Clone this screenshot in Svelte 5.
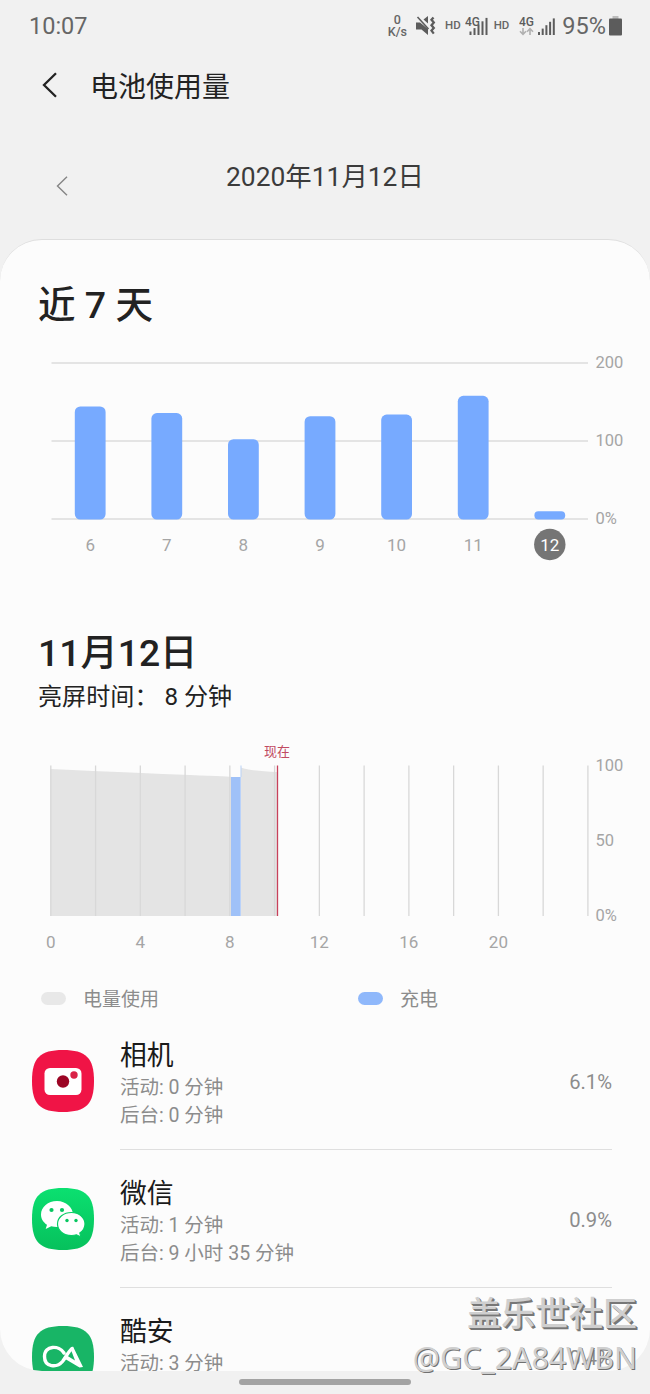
<script>
  const days = [
    { label: '6', value: 145 },
    { label: '7', value: 136.5 },
    { label: '8', value: 103 },
    { label: '9', value: 132.5 },
    { label: '10', value: 134.5 },
    { label: '11', value: 158.5 },
    { label: '12', value: 10.5, selected: true }
  ];

  const apps = [
    { icon: 'camera', name: '相机', lines: ['活动: 0 分钟', '后台: 0 分钟'], percent: '6.1%' },
    { icon: 'wechat', name: '微信', lines: ['活动: 1 分钟', '后台: 9 小时 35 分钟'], percent: '0.9%' },
    { icon: 'coolapk', name: '酷安', lines: ['活动: 3 分钟'], percent: '0.4%' }
  ];

  const dayX = (i) => 90.2 + i * 76.6;
  const barHeight = (value) => value * 0.78;
  const hourX = (hour) => 50.8 + hour * 22.38;

  const hourLines = [0, 2, 4, 6, 8, 10, 12, 14, 16, 18, 20, 22, 24];
  const hourLabels = [0, 4, 8, 12, 16, 20];
  const signal = [0, 1, 2, 3, 4];

  const tile = 'M31 0C54 0 62 8 62 31S54 62 31 62 0 54 0 31 8 0 31 0z';
</script>

<div class="screen">
  <div class="status">
    <span class="clock">10:07</span>
    <div class="speed"><span>0</span><span>K/s</span></div>
    <svg class="mute" width="20" height="20" viewBox="0 0 20 20">
      <path d="M0 6.500h4L12 13v6l-6.500-5.500H0z" fill="#5c5c5c" />
      <path d="M7.500 3.500L12 0v7.500z" fill="#5c5c5c" />
      <path d="M1.500 1l11 12" stroke="#5c5c5c" stroke-width="1.600" />
      <path d="M17.500 1.500l-2 2.300 2.300 2.700-2.300 2.700 2.300 2.700-2.300 2.700 2.300 3" fill="none" stroke="#5c5c5c" stroke-width="2.300" />
    </svg>
    <span class="hd">HD</span>
    <svg class="sim1" width="23" height="22" viewBox="0 0 23 22">
      <text x="0" y="10.500" class="net">4G</text>
      {#each signal as i}
        <rect x={4.5 + i * 4} y={16.5 - i * 3.4} width="2" height={3.5 + i * 3.4} fill="#5c5c5c" />
      {/each}
    </svg>
    <span class="hd">HD</span>
    <svg class="sim2" width="37" height="22" viewBox="0 0 37 22">
      <text x="0" y="10.500" class="net">4G</text>
      <path d="M4 13v6M1 16.300l3 3 3-3M11 20v-6M8 16.700l3-3 3 3" fill="none" stroke="#b0b0b0" stroke-width="1.600" />
      {#each signal as i}
        <rect x={19 + i * 3.7} y={17 - i * 3.4} width="2" height={3 + i * 3.4} fill="#5c5c5c" />
      {/each}
    </svg>
    <span class="level">95%</span>
    <svg width="13" height="20" viewBox="0 0 13 20">
      <rect x="3.500" y="0" width="6" height="4" fill="#bdbdbd" />
      <rect y="2.500" width="13" height="17" rx="1" fill="#5c5c5c" />
    </svg>
  </div>

  <header>
    <svg width="16" height="26" viewBox="0 0 16 26">
      <path d="M14 1.200L2 13l12 11.800" fill="none" stroke="#222" stroke-width="2.300" />
    </svg>
    <h1>电池使用量</h1>
  </header>

  <div class="date">
    <svg width="12" height="20" viewBox="0 0 12 20">
      <path d="M11 0.800L1.500 10 11 19.200" fill="none" stroke="#858585" stroke-width="1.400" />
    </svg>
    <span>2020年11月12日</span>
  </div>

  <main>
    <h2>近 7 天</h2>

    <svg class="chart" width="650" height="230" viewBox="0 340 650 230">
      {#each [[200, 363], [100, 441], ['0%', 519]] as [label, y]}
        <line x1="51.500" x2="588" y1={y} y2={y} stroke="#dcdcdc" stroke-width="1.500" />
        <text x="595.500" y={y + 5.2}>{label}</text>
      {/each}
      {#each days as day, i}
        <rect x={dayX(i) - 15.4} y={519.5 - barHeight(day.value)} width="30.800" height={barHeight(day.value)} rx={day.selected ? 4 : 5.5} fill="#77aaff" />
        {#if day.selected}
          <circle cx={dayX(i)} cy="544.500" r="15.700" fill="#757575" />
        {/if}
        <text class="day" class:selected={day.selected} x={dayX(i)} y="551">{day.label}</text>
      {/each}
    </svg>

    <h2 class="today">11月12日</h2>
    <p class="screen-time">亮屏时间： 8 分钟</p>

    <svg class="chart" width="650" height="225" viewBox="0 735 650 225">
      <path d="M50.500 769Q140 773 190 775T231 777V916H50.500zM241 767.500Q251 771 277 772V916H241z" fill="#e4e4e4" />
      {#each hourLines as hour}
        <line x1={hourX(hour)} x2={hourX(hour)} y1="765.500" y2="916" stroke="#d8d8d8" stroke-width="1.300" />
      {/each}
      <rect x="231" y="777" width="9.700" height="139" fill="#9fc1f8" />
      <line x1="241" x2="241" y1="765.500" y2="777" stroke="#b9d1f5" />
      <line x1="277.500" x2="277.500" y1="765.500" y2="916" stroke="#c8415b" stroke-width="1.300" />
      <text class="now" x="277" y="756">现在</text>
      <text x="595.500" y="770.500">100</text>
      <text x="595.500" y="845.500">50</text>
      <text x="595.500" y="920.500">0%</text>
      {#each hourLabels as hour}
        <text class="hour" x={hourX(hour)} y="947.500">{hour}</text>
      {/each}
    </svg>

    <div class="legend">
      <i></i><span>电量使用</span>
      <i class="charging"></i><span>充电</span>
    </div>

    <ul>
      {#each apps as app}
        <li>
          <svg class="icon" width="62" height="62" viewBox="0 0 62 62">
            {#if app.icon === 'camera'}
              <path d={tile} fill="#f01446" />
              <rect x="12.500" y="18" width="37" height="27" rx="5.500" fill="#fff" />
              <circle cx="31" cy="31.500" r="6.200" fill="#9c0524" />
              <circle cx="42" cy="25" r="3.700" fill="#d92347" />
            {:else if app.icon === 'wechat'}
              <defs>
                <linearGradient id="wechat" x2="0" y2="1">
                  <stop offset="0" stop-color="#0be070" />
                  <stop offset="1" stop-color="#06c15c" />
                </linearGradient>
              </defs>
              <path d={tile} fill="url(#wechat)" />
              <path d="M25 13C16 13 9 19 9 26.500c0 4.500 2.500 8 6 10.300L13.700 41l5.500-2.800c2 .5 3.800.8 5.800.8 9 0 16-5.500 16-12.500S34 13 25 13z" fill="#fff" />
              <circle cx="19.500" cy="22" r="2.100" fill="#08c660" />
              <circle cx="30" cy="22" r="2.100" fill="#08c660" />
              <path d="M39.500 24.500C31.500 24.500 25.500 29.500 25.500 36s6 11.500 14 11.500c1.800 0 3.500-.2 5-.7l4.500 2.300-1.200-4c3.200-2.200 5.200-5.300 5.200-9.100 0-6.500-6-11.500-13.500-11.500z" fill="#fff" stroke="#08cd64" stroke-width="1.200" />
              <circle cx="35" cy="32.500" r="1.700" fill="#08c660" />
              <circle cx="44" cy="32.500" r="1.700" fill="#08c660" />
            {:else}
              <path d={tile} fill="#18b566" />
              <path d="M32 27C27 19 12.500 19 12.500 30.500c0 11 12.500 11.500 18 5C34 31 36 26 40 22.500" fill="none" stroke="#fff" stroke-width="3.400" stroke-linecap="round" />
              <path d="M38.500 22.500l2.500-2 10 20.500-3.500.5L31.500 32l2.500-3 9 5.500z" fill="#fff" />
            {/if}
          </svg>
          <div class="info">
            <div class="text">
              <strong>{app.name}</strong>
              {#each app.lines as line}
                <span>{line}</span>
              {/each}
            </div>
            <span class="percent">{app.percent}</span>
          </div>
        </li>
      {/each}
    </ul>
  </main>

  <footer><div class="handle"></div></footer>

  <div class="watermark">
    <b>盖乐世社区</b>
    <span>@GC_2A84WBN</span>
  </div>
</div>

<style>
  :global(body) {
    margin: 0;
    background: #f1f1f1;
  }

  .screen {
    position: relative;
    width: 650px;
    height: 1394px;
    overflow: hidden;
    display: flex;
    flex-direction: column;
    background: #f1f1f1;
    color: #222;
    font-family: Roboto, 'Noto Sans CJK SC', sans-serif;
  }

  .status {
    display: flex;
    align-items: center;
    height: 52px;
    padding: 0 28px 0 29px;
    color: #666;
  }

  .clock {
    flex: 1;
    font-size: 23.500px;
  }

  .speed {
    display: flex;
    flex-direction: column;
    align-items: center;
    margin-right: 9px;
    font-size: 12.500px;
    font-weight: 500;
    line-height: 12px;
  }

  .hd {
    font-size: 11.500px;
    font-weight: 500;
    line-height: 20px;
    margin-bottom: 3px;
  }

  .mute {
    margin-right: 9px;
  }

  .sim1 {
    margin: 0 6px 0 4px;
  }

  .sim2 {
    margin: 0 6px 0 10px;
  }

  .net {
    font-size: 12px;
    font-weight: 500;
    fill: #5c5c5c;
  }

  .level {
    font-size: 23.500px;
    margin-right: 3px;
  }

  header {
    display: flex;
    align-items: center;
    height: 66px;
    padding-left: 42px;
    gap: 32px;
  }

  h1 {
    margin: 0;
    font-size: 28px;
    font-weight: 400;
  }

  .date {
    display: flex;
    height: 121px;
    padding-left: 56px;
    box-sizing: border-box;
  }

  .date svg {
    margin-top: 58px;
  }

  .date span {
    margin: 39px 0 0 158px;
    font-size: 26.400px;
    line-height: 40px;
    color: #3b3b3b;
  }

  main {
    height: 1132px;
    box-sizing: border-box;
    overflow: hidden;
    border-top: 1px solid #dedede;
    border-radius: 42px;
    background: #fcfcfc;
  }

  h2 {
    margin: 40px 0 0 38px;
    height: 60px;
    line-height: 50px;
    font-size: 37.500px;
    font-weight: 500;
  }

  h2.today {
    margin-top: 58px;
    height: 50px;
    font-size: 37.300px;
  }

  .screen-time {
    margin: 0 0 0 38px;
    height: 57px;
    line-height: 38px;
    font-size: 24.100px;
  }

  .chart {
    display: block;
  }

  .chart text {
    font-size: 16.500px;
    fill: #a5a5a5;
  }

  .chart .day,
  .chart .hour,
  .chart .now {
    font-size: 17px;
    text-anchor: middle;
  }

  .chart .selected {
    fill: #fff;
  }

  .chart .now {
    font-size: 13px;
    fill: #c14b62;
  }

  .legend {
    display: flex;
    height: 52px;
    padding: 15px 0 0 41px;
    box-sizing: border-box;
    font-size: 19px;
    line-height: 50px;
    color: #8c8c8c;
  }

  .legend span {
    flex: none;
    width: 275px;
  }

  .legend i {
    flex: none;
    width: 25px;
    height: 13px;
    margin: 17px 17px 0 0;
    border-radius: 7px;
    background: #e8e8e8;
  }

  .legend .charging {
    background: #8fb8fb;
  }

  ul {
    margin: 0;
    padding: 0;
    list-style: none;
  }

  li {
    display: flex;
    height: 138px;
    padding: 0 38px 0 32px;
  }

  .icon {
    margin: 38px 26px 0 0;
  }

  .info {
    flex: 1;
    display: flex;
    justify-content: space-between;
    box-sizing: border-box;
    padding-top: 26px;
    border-bottom: 1.500px solid #dfdfdf;
  }

  .text {
    display: flex;
    flex-direction: column;
    line-height: 28px;
    font-size: 19.500px;
    color: #8c8c8c;
  }

  strong {
    line-height: 36px;
    font-size: 26.800px;
    font-weight: 400;
    color: #1a1a1a;
  }

  .percent {
    padding-top: 30px;
    line-height: 28px;
    font-size: 20.200px;
    color: #8c8c8c;
  }

  footer {
    flex: 1;
    display: flex;
    justify-content: center;
    padding-top: 8px;
  }

  .handle {
    width: 172px;
    height: 6px;
    border-radius: 3px;
    background: #a3a3a3;
  }

  .watermark {
    position: absolute;
    right: 13px;
    bottom: 14px;
    display: flex;
    flex-direction: column;
    align-items: flex-end;
    color: #cfcfcf;
    font-family: 'Noto Sans', 'Noto Sans CJK SC', sans-serif;
  }

  .watermark b {
    line-height: 48px;
    font-size: 34px;
    font-weight: 500;
    font-family: 'Noto Sans CJK SC', sans-serif;
    text-shadow: 1px 1px 0 #777, 2px 2px 0 #777;
  }

  .watermark span {
    line-height: 44px;
    font-size: 30.300px;
    text-shadow: 1px 1px 0 #707070;
  }
</style>
